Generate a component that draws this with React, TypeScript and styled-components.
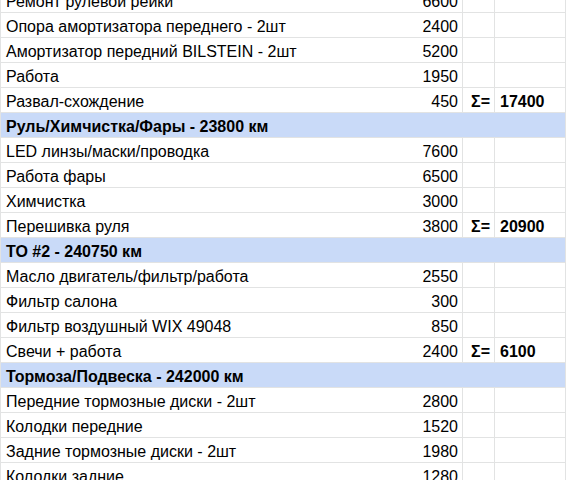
import React from "react";
import styled, { createGlobalStyle } from "styled-components";

const Global = createGlobalStyle`
  html, body { margin: 0; padding: 0; background: #fff; overflow: hidden; }
  body { font-family: "Liberation Sans", Arial, sans-serif; }
`;

const Sheet = styled.div`
  display: grid;
  grid-template-columns: 462px 32px 71px;
  margin-top: -12px;
  border-left: 1px solid #e2e3e3;
  width: 565px;
  font-size: 16px;
  color: #000;
`;

const Cell = styled.div<{ $align?: "left" | "right"; $bold?: boolean }>`
  box-sizing: border-box;
  height: 25px;
  border-right: 1px solid #e2e3e3;
  border-bottom: 1px solid #e2e3e3;
  display: flex;
  align-items: flex-end;
  justify-content: ${(p) => (p.$align === "right" ? "flex-end" : "flex-start")};
  padding: 0 4px 1px 5px;
  line-height: 18px;
  font-weight: ${(p) => (p.$bold ? 700 : 400)};
  white-space: nowrap;
`;

const NameCell = styled(Cell)`
  justify-content: space-between;
`;

const Header = styled(Cell)`
  grid-column: 1 / span 3;
  background: #c9daf8;
  font-weight: 700;
`;

type Item = { name: string; amount: number; sum?: number };
type Row = { header: string } | Item;

const rows: Row[] = [
  { name: "Ремонт рулевой рейки", amount: 6600 },
  { name: "Опора амортизатора переднего - 2шт", amount: 2400 },
  { name: "Амортизатор передний BILSTEIN - 2шт", amount: 5200 },
  { name: "Работа", amount: 1950 },
  { name: "Развал-схождение", amount: 450, sum: 17400 },
  { header: "Руль/Химчистка/Фары - 23800 км" },
  { name: "LED линзы/маски/проводка", amount: 7600 },
  { name: "Работа фары", amount: 6500 },
  { name: "Химчистка", amount: 3000 },
  { name: "Перешивка руля", amount: 3800, sum: 20900 },
  { header: "ТО #2 - 240750 км" },
  { name: "Масло двигатель/фильтр/работа", amount: 2550 },
  { name: "Фильтр салона", amount: 300 },
  { name: "Фильтр воздушный WIX 49048", amount: 850 },
  { name: "Свечи + работа", amount: 2400, sum: 6100 },
  { header: "Тормоза/Подвеска - 242000 км" },
  { name: "Передние тормозные диски - 2шт", amount: 2800 },
  { name: "Колодки передние", amount: 1520 },
  { name: "Задние тормозные диски - 2шт", amount: 1980 },
  { name: "Колодки задние", amount: 1280 },
];

export default function App() {
  return (
    <>
      <Global />
      <Sheet>
        {rows.map((r, i) =>
          "header" in r ? (
            <Header key={i}>{r.header}</Header>
          ) : (
            <React.Fragment key={i}>
              <NameCell>
                <span>{r.name}</span>
                <span>{r.amount}</span>
              </NameCell>
              <Cell $align="right" $bold>
                {r.sum !== undefined ? "Σ=" : ""}
              </Cell>
              <Cell $bold>{r.sum !== undefined ? r.sum : ""}</Cell>
            </React.Fragment>
          )
        )}
      </Sheet>
    </>
  );
}
